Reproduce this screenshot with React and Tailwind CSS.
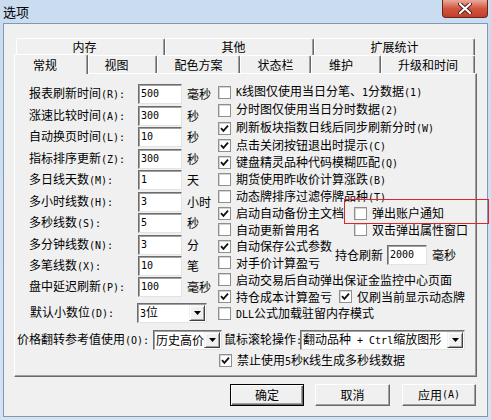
import React from "react";

// 选项 对话框 - 常规 页
const leftRows = [
  ["报表刷新时间(R):", "500", "毫秒", "h-[22px]"],
  ["涨速比较时间(A):", "300", "秒", "h-[21px]"],
  ["自动换页时间(L):", "10", "秒", "h-[22px]"],
  ["指标排序更新(Z):", "300", "秒", "h-[21px]"],
  ["多日线天数(M):", "1", "天", "h-[22px]"],
  ["多小时线数(H):", "3", "小时", "h-[21px]"],
  ["多秒线数(S):", "5", "秒", "h-[22px]"],
  ["多分钟线数(N):", "3", "分", "h-[21px]"],
  ["多笔线数(X):", "10", "笔", "h-[21px]"],
  ["盘中延迟刷新(P):", "100", "毫秒", "h-[21px]"],
];

// 半角字符用等宽小字, 模仿宋体的 6px 半角宽度
const T = ({ children }) =>
  String(children)
    .split(/([\x20-\x7e]+)/)
    .filter(Boolean)
    .map((p, i) =>
      /[\x20-\x7e]/.test(p) ? (
        <span key={i} className="font-['DejaVu_Sans_Mono',monospace] text-[10px] whitespace-pre">
          {p}
        </span>
      ) : (
        <React.Fragment key={i}>{p}</React.Fragment>
      )
    );

const Check = ({ on }) => (
  <span className="w-[13px] h-[13px] shrink-0 border border-[#8e8f8f] bg-white shadow-[inset_1px_1px_0_#d4d4d4] flex items-center justify-center">
    {on && (
      <svg width="9" height="9" viewBox="0 0 9 9">
        <path d="M1 4.2 L3.4 6.8 L8 1.6" fill="none" stroke="#111" strokeWidth="1.8" />
      </svg>
    )}
  </span>
);

const CheckItem = ({ on, label, className = "" }) => (
  <div className={"flex items-center gap-[5px] " + className}>
    <Check on={on} />
    <span className="whitespace-nowrap"><T>{label}</T></span>
  </div>
);

const Field = ({ value, className = "w-[44px]" }) => (
  <div className={className + " h-[20px] bg-white border border-t-[#6d6d6d] border-l-[#6d6d6d] border-b-[#e3e3e3] border-r-[#e3e3e3] shadow-[inset_1px_1px_0_#a0a0a0] pl-[2px] flex items-center"}>
    <T>{value}</T>
  </div>
);

const Arrow = () => (
  <span className="w-[16px] h-[16px] mr-[1px] shrink-0 bg-[#f0f0f0] border border-t-[#f0f0f0] border-l-[#f0f0f0] border-r-[#404040] border-b-[#404040] shadow-[inset_1px_1px_0_#fff,inset_-1px_-1px_0_#a0a0a0] flex items-center justify-center">
    <svg width="7" height="4" viewBox="0 0 7 4">
      <path d="M0 0H7L3.5 4Z" fill="#000" />
    </svg>
  </span>
);

const Select = ({ value, className }) => (
  <div className={className + " h-[20px] bg-white border border-t-[#6d6d6d] border-l-[#6d6d6d] border-b-[#e3e3e3] border-r-[#e3e3e3] shadow-[inset_1px_1px_0_#a0a0a0] flex items-center"}>
    <span className="flex-1 pl-[2px] whitespace-nowrap"><T>{value}</T></span>
    <Arrow />
  </div>
);

const Tab = ({ label, className }) => (
  <div className={className + " h-full flex items-center justify-center bg-[#f0f0f0] border-t border-l border-r border-t-white border-l-white border-r-[#696969] rounded-t-[2px] shadow-[inset_-1px_0_0_#a0a0a0]"}>
    {label}
  </div>
);

const Btn = ({ label, def, className = "" }) => (
  <div className={className + " h-[22px] flex items-center justify-center bg-[#f0f0f0] " + (def
    ? "border border-black shadow-[inset_1px_1px_0_#fff,inset_-1px_-1px_0_#696969,inset_-2px_-2px_0_#a0a0a0]"
    : "border border-t-white border-l-white border-r-[#696969] border-b-[#696969] shadow-[inset_-1px_-1px_0_#a0a0a0]")}>
    <T>{label}</T>
  </div>
);

export default function App() {
  return (
    <div className="relative w-[491px] h-[420px] overflow-hidden bg-gradient-to-b from-[#c9dcf0] to-[#d3e3f4] font-['Noto_Sans_CJK_SC',sans-serif] text-[12px] leading-[14px] text-black">
      {/* 标题栏 */}
      <div className="h-[23px] flex items-start">
        <div className="pl-[3px] pt-[4px] text-[13px] leading-[15px]">选项</div>
        <div className="ml-auto mr-[3px] w-[46px] h-[18px] rounded-b-[4px] border border-t-0 border-[#6b2318] bg-gradient-to-b from-[#e9a99b] via-[#d1553f] to-[#c0402a] flex items-center justify-center">
          <svg width="14" height="11" viewBox="0 0 14 11">
            <path d="M2 1 L12 10 M12 1 L2 10" stroke="#4a1a12" strokeWidth="4" strokeLinecap="round" />
            <path d="M2 1 L12 10 M12 1 L2 10" stroke="#fff" strokeWidth="2.2" strokeLinecap="round" />
          </svg>
        </div>
      </div>

      {/* 对话框主体 */}
      <div className="mx-[3px] h-[394px] bg-[#f0f0f0] border border-[#8197b2] px-[10px] pt-[14px]">
        {/* 标签页 第一行 */}
        <div className="h-[17px] flex px-[2px]">
          <Tab label="内存" className="w-[149px] pr-[12px]" />
          <Tab label="其他" className="w-[149px] pr-[12px]" />
          <Tab label="扩展统计" className="w-[161px]" />
        </div>
        {/* 标签页 第二行 */}
        <div className="h-[18px] flex items-end px-[2px]">
          <div className="relative z-10 -ml-[2px] -mb-[1px] w-[74px] h-[20px] bg-[#f0f0f0] border-t border-l border-r border-t-white border-l-white border-r-[#696969] rounded-t-[2px] shadow-[inset_-1px_0_0_#a0a0a0] flex items-center justify-center pr-[12px]">
            常规
          </div>
          <Tab label="视图" className="w-[69px] pr-[12px]" />
          <Tab label="配色方案" className="w-[83px]" />
          <Tab label="状态栏" className="w-[71px]" />
          <Tab label="维护" className="w-[70px] pr-[10px]" />
          <Tab label="升级和时间" className="w-[94px]" />
        </div>

        {/* 页面 */}
        <div className="h-[304px] border border-t-white border-l-white border-r-[#696969] border-b-[#696969] shadow-[inset_-1px_-1px_0_#a0a0a0] pt-[10px]">
          <div className="flex">
            {/* 左列 */}
            <div className="w-[203px] flex flex-col">
              {leftRows.map(([label, val, unit, h]) => (
                <div key={label} className={h + " flex items-start"}>
                  <span className="w-[123px] pl-[14px] h-[20px] flex items-center whitespace-nowrap"><span><T>{label}</T></span></span>
                  <Field value={val} />
                  <span className="ml-[5px] h-[20px] flex items-center">{unit}</span>
                </div>
              ))}
              <div className="mt-[5px] flex items-center">
                <span className="w-[122px] pl-[15px] whitespace-nowrap"><T>默认小数位(D):</T></span>
                <Select value="3位" className="w-[70px]" />
              </div>
            </div>

            {/* 右列 */}
            <div className="flex-1 flex flex-col -mt-px">
              <CheckItem className="h-[18px]" label="K线图仅使用当日分笔、1分数据(1)" />
              <CheckItem className="h-[18px]" label="分时图仅使用当日分时数据(2)" />
              <CheckItem className="h-[18px]" on label="刷新板块指数日线后同步刷新分时(W)" />
              <CheckItem className="h-[17px]" on label="点击关闭按钮退出时提示(C)" />
              <CheckItem className="h-[17px]" on label="键盘精灵品种代码模糊匹配(Q)" />
              <CheckItem className="h-[17px]" label="期货使用昨收价计算涨跌(B)" />
              <CheckItem className="h-[17px]" label="动态牌排序过滤停牌品种(T)" />
              <div className="h-[16px] flex items-center">
                <CheckItem className="w-[136px]" on label="启动自动备份主文档" />
                <CheckItem label="弹出账户通知" />
              </div>
              <div className="h-[17px] flex items-center">
                <CheckItem className="w-[136px]" label="自动更新曾用名" />
                <CheckItem label="双击弹出属性窗口" />
              </div>
              <div className="flex items-center">
                <div className="w-[117px] flex flex-col">
                  <CheckItem className="h-[16px]" on label="自动保存公式参数" />
                  <CheckItem className="h-[17px]" label="对手价计算盈亏" />
                </div>
                <span className="whitespace-nowrap">持仓刷新</span>
                <Field value="2000" className="w-[40px] ml-[4px]" />
                <span className="ml-[5px]">毫秒</span>
              </div>
              <CheckItem className="h-[17px]" label="启动交易后自动弹出保证金监控中心页面" />
              <div className="h-[17px] flex items-center gap-[7px]">
                <CheckItem on label="持仓成本计算盈亏" />
                <CheckItem on label="仅刷当前显示动态牌" />
              </div>
              <CheckItem className="h-[17px]" label="DLL公式加载驻留内存模式" />
            </div>
          </div>

          {/* 底部两行 */}
          <div className="mt-[7px] flex items-center pl-[2px]">
            <span className="w-[136px] whitespace-nowrap"><T>价格翻转参考值使用(O):</T></span>
            <Select value="历史高价" className="w-[69px]" />
            <span className="ml-[2px] w-[76px] whitespace-nowrap"><T>鼠标滚轮操作:</T></span>
            <Select value="翻动品种 + Ctrl缩放图形" className="w-[165px]" />
          </div>
          <CheckItem className="mt-[2px] h-[17px] pl-[204px]" on label="禁止使用5秒K线生成多秒线数据" />
        </div>

        {/* 按钮 */}
        <div className="mt-[7px] flex pl-[216px]">
          <Btn def label="确定" className="w-[74px]" />
          <Btn label="取消" className="w-[75px] ml-[11px]" />
          <Btn label="应用(A)" className="w-[74px] ml-[12px]" />
        </div>
      </div>

      {/* 红色标注框 */}
      <div className="absolute left-[344px] top-[199px] w-[145px] h-[25px] border border-[#e0242b]" />
    </div>
  );
}
